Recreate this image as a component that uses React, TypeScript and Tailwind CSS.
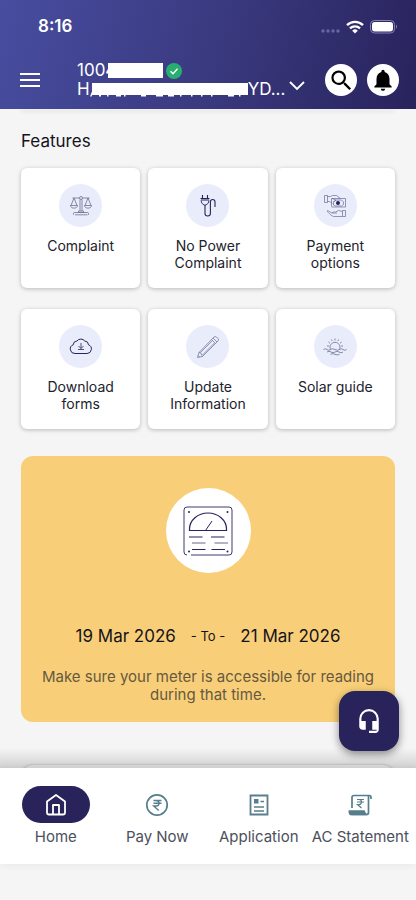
import { ReactNode, useState } from "react";
import { MdHeadsetMic, MdNotifications, MdSearch } from "react-icons/md";

interface Feature {
  label: string;
  icon: ReactNode;
}

interface Tab {
  id: string;
  label: string;
  icon: ReactNode;
}

const ScalesIcon = () => (
  <svg width="22" height="22" viewBox="0 0 22 22" fill="none" stroke="#6d6d92" strokeWidth="0.8">
    <circle cx="11" cy="3" r="1.5" />
    <path d="M9.5 3H2.5M12.500 3H19.500M10 4.500V16M12 4.500V16M8.500 16h5v1.500h-5z" />
    <path d="M4 3 1 10.500M4 3l3 7.500M18 3l-3 7.500M18 3l3 7.500" />
    <path d="M.5 10.500h7c0 3.500-7 3.500-7 0zM14.500 10.500h7c0 3.500-7 3.500-7 0z" />
    <path d="M3.500 19.800v-1.300q0-1 1-1h13q1 0 1 1v1.300M5 19.800h12.500" />
  </svg>
);

const PlugIcon = () => (
  <svg width="22" height="22" viewBox="0 0 22 22" fill="none" stroke="#29235c" strokeWidth="1.100">
    <path d="M5.500 0v3M10.500 0v3M3.500 3.500h9M4 5h8" />
    <path d="M4 5.500q0 3 3 4.500h2q3-1.500 3-4.500" strokeWidth="0.9" />
    <path d="M8 10v8.500q0 2.500 2.700 2.500t2.700-2.500V7q0-2.500 2.300-2.500T18 7v5" strokeWidth="1.100" />
  </svg>
);

const PaymentIcon = () => (
  <svg width="24" height="24" viewBox="0 0 24 24" fill="none" stroke="#6d6d92" strokeWidth="0.7">
    <path d="M1.500 1.500h3v7h-3zM4.500 2.500h3l2-1h4l4 3M4.500 7.500h2l3 2M9 4.500l4 1.500-2 2" />
    <path d="M8.500 12.500V4.500h14v8.500h-14M10.500 11V7.500l3-1.500h5l2 2v2.500l-2 1.500h-6z" />
    <circle cx="15" cy="9" r="1.700" fill="#29235c" stroke="#29235c" />
    <path d="M19.500 16.500h3v6h-3zM19.500 17.500l-4-1-3 1.500h-2l-1.500 1h5M9 19l-4.500-2.500q-1 1 4 5l2 1h9" />
  </svg>
);

const CloudIcon = () => (
  <svg width="24" height="24" viewBox="0 0 24 24" fill="none" stroke="#29235c" strokeWidth="1">
    <path d="M6 18.500h12a4.500 4.500 0 0 0 1.500-8.700 4 4 0 0 0-3.700-3.800 5 5 0 0 0-7.900 0 4 4 0 0 0-3.700 3.800A4.500 4.500 0 0 0 6 18.500z" />
    <path d="M12 8v5.500M9.500 11l2.500 2.500 2.500-2.500M9 14.500h6" strokeWidth="0.8" />
  </svg>
);

const PencilIcon = () => (
  <svg width="24" height="24" viewBox="0 0 24 24" fill="none" stroke="#6d6d92" strokeWidth="0.7">
    <path d="M1.500 22.500l1.500-5L18 2q1.200-1 2.500 0l1.500 1.500q1 1.300 0 2.500L6.500 21.500z" />
    <path d="M3 17.500l2 .5.500 1.500 1 2M4.500 17.500l12-12M6.500 20l12-12M15.500 4.500l4 4M17 3l4 4M2 20.500l1.500 1.500" />
  </svg>
);

const SunIcon = () => (
  <svg width="24" height="24" viewBox="0 0 24 24" fill="none" stroke="#6d6d92" strokeWidth="0.8">
    <path d="M7.500 14.500a5 5 0 1 1 9 0M12 3.500v2M8.500 4.500l.7 1.500M15.500 4.500l-.7 1.500M5.500 7l1.500 1.200M18.500 7l-1.500 1.200M4 11h2M20 11h-2" />
    <path d="M.5 14.500q1.800-1.500 3.500 0t3.500 0 4.500 0 4.500 0 3.500 0 3.500 0" />
    <path d="M4 17q2-1.500 4 0t4 0 4 0 4 0M7.500 19.300q2-1.300 4.500 0t4.500 0" />
  </svg>
);

const MeterIcon = () => (
  <svg width="50" height="50" viewBox="0 0 50 50" fill="none" stroke="#29235c">
    <path d="M4 49q-3 0-3-3V4q0-3 3-3h42q3 0 3 3v42q0 3-3 3H8" strokeWidth="0.9" />
    <path d="M6.500 24.500V23a18.500 16 0 0 1 37 0v1.500z" strokeWidth="1.200" />
    <path d="M22.500 24.500l6.500-9.500" />
    <path d="M6 31h13.500M28 31h13.500M9 43.500h13.500M28.500 43.500h13.500" strokeWidth="1.200" />
    <path d="M9 37h13.500M31.500 37H45" strokeWidth="0.7" />
    <g fill="#29235c" stroke="none">
      <circle cx="6" cy="6" r="1" />
      <circle cx="44.500" cy="6" r="1" />
      <circle cx="6" cy="45.500" r="1" />
      <circle cx="44.500" cy="45.500" r="1" />
    </g>
  </svg>
);

const HomeIcon = () => (
  <svg width="24" height="24" viewBox="0 0 24 24" fill="none" stroke="white" strokeWidth="1.800" strokeLinejoin="round">
    <path d="M3 8.500 12 2l9 6.500v11q0 2-2 2H5q-2 0-2-2z" />
    <path d="M9 21v-9h6v9" />
  </svg>
);

const RupeeIcon = () => (
  <svg width="24" height="24" viewBox="0 0 24 24" fill="none" stroke="#577e8c">
    <circle cx="12" cy="12" r="10.200" strokeWidth="1.700" />
    <path d="M8.500 7.500h8M8.500 10.300h8M8.500 7.500h2.500q3 0 3 2.800T11 13H8.700l5 4.500" strokeWidth="1.400" />
  </svg>
);

const ApplicationIcon = () => (
  <svg width="24" height="24" viewBox="0 0 24 24" fill="none" stroke="#577e8c" strokeWidth="1.800">
    <path d="M3.500 2.500h17v19h-17z" />
    <path d="M7 14h10M7 18h10M13.500 8.500H17" strokeWidth="1.500" />
    <path d="M7 6h4.500v4.500H7z" fill="#577e8c" stroke="none" />
  </svg>
);

const StatementIcon = () => (
  <svg width="24" height="24" viewBox="0 0 24 24" fill="none" stroke="#577e8c" strokeWidth="1.700">
    <path d="M4 15V4.500q0-2 2-2h15.500q1.500 0 1.500 2V6" />
    <path d="M20.500 3v16.500q0 2-2 2H3.500q-2 0-2-2.500h14.500q.5 2.500 2.500 2.500" />
    <path d="M1.500 18h14.500l1.500 3.500H4q-2.500 0-2.500-3.500z" fill="#577e8c" />
    <path d="M9 6.500h7M9 9h7M9 6.500h2q2.500 0 2.500 2.500T11 11.500H9.500l4 3.500" strokeWidth="1.200" />
  </svg>
);

const features: Feature[] = [
  { label: "Complaint", icon: <ScalesIcon /> },
  { label: "No Power Complaint", icon: <PlugIcon /> },
  { label: "Payment options", icon: <PaymentIcon /> },
  { label: "Download forms", icon: <CloudIcon /> },
  { label: "Update Information", icon: <PencilIcon /> },
  { label: "Solar guide", icon: <SunIcon /> },
];

const tabs: Tab[] = [
  { id: "home", label: "Home", icon: <HomeIcon /> },
  { id: "pay", label: "Pay Now", icon: <RupeeIcon /> },
  { id: "application", label: "Application", icon: <ApplicationIcon /> },
  { id: "statement", label: "AC Statement", icon: <StatementIcon /> },
];

function StatusBar() {
  return (
    <div className="flex h-[53px] items-center justify-between pl-[38px] pr-[18px]">
      <span className="text-[17px] font-semibold">8:16</span>
      <div className="flex items-center gap-[6px]">
        <svg width="19" height="14" viewBox="0 0 19 14" fill="#6a66a0">
          <circle cx="2" cy="11" r="1.700" />
          <circle cx="7" cy="11" r="1.700" />
          <circle cx="12" cy="11" r="1.700" />
          <circle cx="17" cy="11" r="1.700" />
        </svg>
        <svg width="18" height="14" viewBox="0 0 18 14" fill="none" stroke="white" strokeWidth="2.300">
          <path d="M1 5.200a11.500 11.500 0 0 1 16 0M4 8.300a7.200 7.200 0 0 1 10 0" />
          <path d="M9 13.500 6.200 10.700a4 4 0 0 1 5.600 0z" fill="white" stroke="none" />
        </svg>
        <svg width="28" height="14" viewBox="0 0 28 14">
          <rect x="0.5" y="0.5" width="24" height="12.500" rx="4" fill="none" stroke="#8581b4" />
          <rect x="2" y="2" width="21" height="9.500" rx="2.700" fill="white" />
          <path d="M26 4.500q2 2.200 0 4.500z" fill="#8581b4" />
        </svg>
      </div>
    </div>
  );
}

function Header() {
  return (
    <header className="relative z-10 bg-linear-[105deg] from-[#484da0] via-[#3a3a80] to-[#29235c] text-white">
      <StatusBar />
      <div className="flex h-14 items-center pb-[2px] pl-5 pr-[17px]">
        <button type="button" aria-label="Menu" className="flex w-5 flex-col gap-1">
          <span className="h-[2px] bg-white" />
          <span className="h-[2px] bg-white" />
          <span className="h-[2px] bg-white" />
        </button>

        <button type="button" aria-label="Switch account" className="ml-[37px] flex min-w-0 flex-1 items-end text-left text-[17px] leading-[19px]">
          <span className="min-w-0">
            <span className="flex items-center">
              <span>1004</span>
              <span className="relative -ml-2 h-[15px] w-[55px] bg-white" />
              <svg className="ml-[3px]" width="16" height="16" viewBox="0 0 16 16">
                <circle cx="8" cy="8" r="8" fill="#27ae70" />
                <path d="M4.500 8.300 7 10.700l4.500-5" fill="none" stroke="white" strokeWidth="1.400" />
              </svg>
            </span>
            <span className="flex items-center">
              <span>H</span>
              <svg width="158" height="16" viewBox="0 0 158 16" fill="white">
                <path d="M2 1h156v12H2z" />
                <path d="M0 14.500l2-5 1.500 0-2 5zM9 13h2v1.500H9zM17 13h1.500v1.500H17zM26 13h5v1.500h-5zM34 13h1.500v1.500H34zM51 13h5v1.500h-5zM66 13h7v1.500h-7zM78 13h6v1.500h-6zM90 13h1.500v1.500H90zM101 13h1.500v1.500H101zM111 13h1.500v1.500H111zM121 13h1.500v1.500H121zM138 13h6v1.500h-6zM149 13h1.500v1.500H149z" />
              </svg>
              <span>YD...</span>
            </span>
          </span>
          <svg className="mb-1 ml-1 shrink-0" width="16" height="16" viewBox="0 0 16 16" fill="none" stroke="white" strokeWidth="1.900">
            <path d="M1 3l7 7 7-7" />
          </svg>
        </button>

        <div className="flex gap-[10px]">
          <button type="button" aria-label="Search" className="flex size-8 items-center justify-center rounded-full bg-white text-black">
            <MdSearch size={27} />
          </button>
          <button type="button" aria-label="Notifications" className="flex size-8 items-center justify-center rounded-full bg-white text-black">
            <MdNotifications size={26} />
          </button>
        </div>
      </div>
    </header>
  );
}

function FeatureCard({ label, icon }: Feature) {
  return (
    <button
      type="button"
      className="flex min-h-[120px] flex-col items-center rounded-md bg-white px-4 pt-4 shadow-[0_1px_4px_rgba(0,0,0,0.25)]"
    >
      <span className="flex size-[43px] items-center justify-center rounded-full bg-[#e9edfb]">{icon}</span>
      <span className="mt-[10px] text-sm leading-[17px] text-[#22222c]">{label}</span>
    </button>
  );
}

function MeterReading() {
  return (
    <section className="mt-[27px] flex flex-col items-center rounded-xl bg-[#f8cf78] px-4 pb-[18px] pt-8 text-center">
      <div className="flex size-[85px] items-center justify-center rounded-full bg-white">
        <MeterIcon />
      </div>
      <div className="mt-[51px] flex items-center gap-[15px] text-[17px] leading-6 text-[#15131a]">
        <span>19 Mar 2026</span>
        <span className="text-[13px]">- To -</span>
        <span>21 Mar 2026</span>
      </div>
      <p className="mt-5 text-[15px] leading-[18px] text-[#665840]">
        Make sure your meter is accessible for reading during that time.
      </p>
    </section>
  );
}

export default function App() {
  const [active, setActive] = useState("home");

  return (
    <div className="flex h-screen flex-col bg-[#f5f5f5] font-['Inter',sans-serif]">
      <Header />

      <div className="relative min-h-0 flex-1">
        <main className="h-full overflow-hidden px-[21px]">
          <div className="h-px rounded-b-md bg-[#f0f0f0] shadow-[0_1px_4px_rgba(0,0,0,0.2)]" />
          <h1 className="mt-[19px] text-[17px] leading-6 text-[#15131a]">Features</h1>
          <div className="mt-[15px] grid grid-cols-3 gap-x-2 gap-y-[21px]">
            {features.map((feature) => (
              <FeatureCard key={feature.label} {...feature} />
            ))}
          </div>
          <MeterReading />
          <div className="mt-[43px] h-20 rounded-xl bg-[#f5f5f5] shadow-[0_0_3px_rgba(0,0,0,0.25)]" />
        </main>
        <div className="pointer-events-none absolute inset-x-0 bottom-0 h-5 bg-linear-to-b from-transparent to-black/15" />
        <button
          type="button"
          aria-label="Support"
          className="absolute bottom-[17px] right-[17px] flex size-[60px] items-center justify-center rounded-2xl bg-[#29235c] text-white shadow-[0_3px_8px_rgba(0,0,0,0.45)]"
        >
          <MdHeadsetMic size={26} />
        </button>
      </div>

      <nav className="grid h-24 shrink-0 grid-cols-4 bg-white px-[5px] pt-[18px] shadow-[0_1px_8px_rgba(0,0,0,0.06)]">
        {tabs.map((tab) => (
          <button key={tab.id} type="button" onClick={() => setActive(tab.id)} className="flex flex-col items-center">
            <span
              className={
                active === tab.id
                  ? "flex h-[37px] w-[68px] items-center justify-center rounded-full bg-[#29235c]"
                  : "flex h-[37px] w-[68px] items-center justify-center rounded-full"
              }
            >
              {tab.icon}
            </span>
            <span className="mt-1 whitespace-nowrap text-[15px] leading-5 text-[#4c505c]">{tab.label}</span>
          </button>
        ))}
      </nav>
      <div className="h-9 shrink-0" />
    </div>
  );
}
